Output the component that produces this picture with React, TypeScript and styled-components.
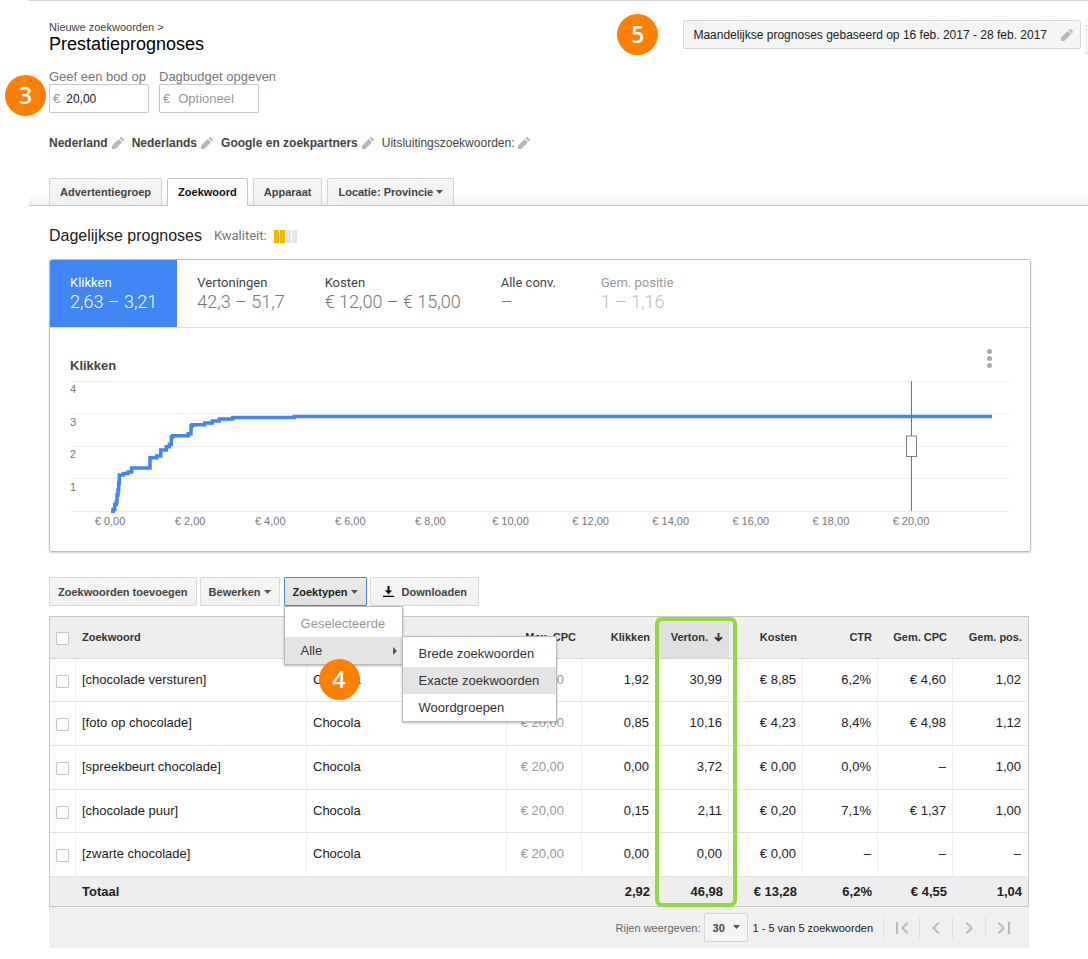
import React from "react";
import styled, { createGlobalStyle, css } from "styled-components";
import {
  MdChevronLeft,
  MdChevronRight,
  MdFirstPage,
  MdLastPage,
} from "react-icons/md";

const GlobalStyle = createGlobalStyle`
  *, *::before, *::after { box-sizing: border-box; }
  body {
    margin: 0;
    background: #fff;
    color: #222;
    font-family: "Liberation Sans", Arial, sans-serif;
    font-size: 13px;
  }
  button, input, select { font-family: inherit; margin: 0; }
  h1, h2, h3, p, ul { margin: 0; padding: 0; font-weight: normal; }
  ul { list-style: none; }
`;

/* ---------- shared ---------- */

const Page = styled.div`
  margin-left: 29px;
  border-top: 1px solid #d8d8d8;
`;

const Badge = styled.span`
  position: absolute;
  display: flex;
  align-items: center;
  justify-content: center;
  width: 41px;
  height: 41px;
  border-radius: 50%;
  background: #ff8000;
  color: #fff;
  font: 600 23px/41px "Open Sans", sans-serif;
  z-index: 5;
`;

const StepThree = styled(Badge)`
  left: -44px;
  top: 6px;
`;

const StepFour = styled(Badge)`
  left: 35px;
  top: 82px;
`;

const StepFive = styled(Badge)`
  right: calc(100% + 25px);
  top: -6px;
`;

const CaretIcon = styled.svg`
  display: block;
  fill: #555;
`;

const Caret = () => (
  <CaretIcon width="7" height="4" viewBox="0 0 7 4" aria-hidden="true">
    <path d="M0 0h7L3.5 4z" />
  </CaretIcon>
);

const PencilIcon = styled.svg`
  display: block;
  fill: #b8b8b8;
`;

const Pencil = () => (
  <PencilIcon width="12" height="12" viewBox="0 0 12 12" aria-hidden="true">
    <path d="M0 8.700L6.700 2 10 5.300 3.300 12H0zM7.500 1.200L8.400.300c.400-.400 1-.400 1.400 0l1.900 1.900c.400.400.400 1 0 1.400l-.900.900z" />
  </PencilIcon>
);

/* ---------- header ---------- */

const Header = styled.header`
  display: flex;
  justify-content: space-between;
  align-items: flex-start;
  padding: 19px 0 0 20px;
`;

const Crumb = styled.nav`
  font-size: 11px;
  line-height: 14px;
  color: #444;

  a {
    color: inherit;
    text-decoration: none;
  }
`;

const Title = styled.h1`
  font-size: 18px;
  line-height: 20px;
  color: #000;
`;

const HeaderActions = styled.div`
  display: flex;
  align-items: flex-start;
  gap: 4px;
`;

const DateWrap = styled.div`
  position: relative;
`;

const DateButton = styled.button`
  display: flex;
  align-items: center;
  gap: 14px;
  height: 29px;
  padding: 0 7px 0 9px;
  border: 1px solid #d8d8d8;
  border-radius: 2px;
  background: #f4f4f4;
  color: #222;
  font-size: 12px;
  white-space: nowrap;
`;

const NextButton = styled.div`
  width: 3px;
  height: 29px;
  margin-top: 5px;
  border: solid #d8d8d8;
  border-width: 1px 0;
  background: #f4f4f4;
`;

const BidForm = styled.form`
  position: relative;
  display: flex;
  gap: 10px;
  margin: 15px 0 0 20px;
`;

const Field = styled.div`
  width: 100px;

  label {
    display: block;
    line-height: 15px;
    color: #777;
    white-space: nowrap;
  }
`;

const MoneyBox = styled.div`
  display: flex;
  align-items: center;
  height: 29px;
  padding-left: 3px;
  border: 1px solid #c8c8c8;
  border-radius: 1px;
  color: #999;
`;

const MoneyInput = styled.input<{ $indent?: boolean }>`
  flex: 1;
  min-width: 0;
  height: 27px;
  padding: 0 0 0 ${(p) => (p.$indent ? 8 : 6)}px;
  border: 0;
  outline: 0;
  background: transparent;
  color: #222;
  font-size: 12px;

  &::placeholder {
    color: #999;
    font-size: 13px;
    opacity: 1;
  }
`;

const Filters = styled.div`
  display: flex;
  gap: 8px;
  margin: 22px 0 0 20px;
  height: 16px;
`;

const FilterButton = styled.button<{ $plain?: boolean }>`
  display: flex;
  align-items: center;
  gap: 4px;
  padding: 0;
  border: 0;
  background: none;
  color: #444;
  font-size: 12px;
  font-weight: ${(p) => (p.$plain ? "normal" : "bold")};
  white-space: nowrap;
`;

const TabBar = styled.nav`
  display: flex;
  gap: 5px;
  margin-top: 27px;
  padding-left: 20px;
  border-bottom: 1px solid #c4c4c4;
  background: linear-gradient(#fff 50%, #f1f1f1);
`;

const Tab = styled.button<{ $active?: boolean }>`
  display: flex;
  align-items: center;
  gap: 3px;
  height: 27px;
  padding: 0 10px;
  border: 1px solid #d4d4d4;
  border-bottom: 0;
  border-radius: 2px 2px 0 0;
  background: linear-gradient(#f6f6f6, #efefef);
  color: #444;
  font-size: 11px;
  font-weight: bold;
  white-space: nowrap;

  ${(p) =>
    p.$active &&
    css`
      height: 28px;
      margin-bottom: -1px;
      padding-bottom: 1px;
      border-color: #c4c4c4;
      background: #fff;
      color: #111;
    `}
`;

/* ---------- forecast card ---------- */

const SectionHead = styled.div`
  display: flex;
  align-items: center;
  height: 20px;
  margin: 20px 0 13px 20px;
`;

const SectionTitle = styled.h2`
  font-size: 16px;
  line-height: 20px;
`;

const QualityLabel = styled.span`
  margin: 0 7px 0 12px;
  font-family: Roboto, sans-serif;
  line-height: 20px;
  color: #777;
`;

const QualityBars = styled.div`
  display: flex;
  gap: 1px;
`;

const QualityBar = styled.i<{ $on: boolean }>`
  width: 5px;
  height: 13px;
  background: ${(p) => (p.$on ? "#f5b400" : "#e5e5e5")};
`;

const Card = styled.section`
  margin: 0 57px 0 20px;
  border: 1px solid #c0c0c0;
  border-radius: 3px;
  box-shadow: 0 1px 2px rgba(0, 0, 0, 0.2);
`;

const Metrics = styled.div`
  display: flex;
  border-bottom: 1px solid #dedede;
`;

const Metric = styled.button<{ $state?: "active" | "muted" }>`
  padding: 15px 20px 14px;
  border: 0;
  border-radius: ${(p) => (p.$state === "active" ? "2px 0 0 0" : "0")};
  background: ${(p) => (p.$state === "active" ? "#4285f4" : "none")};
  font-family: Roboto, sans-serif;
  text-align: left;
  white-space: nowrap;

  span, strong {
    display: block;
  }
  span {
    min-width: 60px;
    font-size: 13px;
    line-height: 16px;
    color: ${(p) =>
      p.$state === "active" ? "#fff" : p.$state === "muted" ? "#999" : "#444"};
  }
  strong {
    font-size: 18px;
    font-weight: 300;
    line-height: 22px;
    color: ${(p) =>
      p.$state === "active" ? "#fff" : p.$state === "muted" ? "#bbb" : "#777"};
  }
`;

const ChartArea = styled.div`
  padding: 20px 20px 15px;
`;

const ChartHead = styled.div`
  display: flex;
  justify-content: space-between;
  height: 24px;
`;

const ChartTitle = styled.h3`
  align-self: flex-end;
  font-size: 13px;
  font-weight: bold;
  line-height: 13px;
  color: #444;
`;

const MoreButton = styled.button`
  width: 20px;
  height: 20px;
  margin-right: 11px;
  padding: 0;
  border: 0;
  background: none;

  svg {
    display: block;
    fill: #aaa;
  }
`;

const ChartSvg = styled.svg`
  display: block;
  width: 100%;
  height: auto;

  text {
    font-size: 11px;
    fill: #777;
  }
`;

const GRID = [9, 41, 74, 106, 139];
const Y_LABELS: [string, number][] = [["4", 21], ["3", 54], ["2", 86], ["1", 119]];
const X_LABELS = [0, 2, 4, 6, 8, 10, 12, 14, 16, 18, 20];

const Chart = () => (
  <ChartSvg viewBox="0 0 940 164" role="img" aria-label="Klikken per bod">
    {GRID.map((y) => (
      <rect key={y} x="0" y={y} width="940" height="1" fill="#efefef" />
    ))}
    {Y_LABELS.map(([label, y]) => (
      <text key={label} x="0" y={y}>
        {label}
      </text>
    ))}
    {X_LABELS.map((value, i) => (
      <text key={value} x={40 + i * 80.1} y="153" textAnchor="middle">
        € {value},00
      </text>
    ))}
    <path
      d="M41 139.500H43V137.500H44.700V132.500H46.300V130H47V123H48V118H48.700V111H49.300V103H53.300V101.500H58V100H61.700V96H80V85.700H86.700V84H90.700V78H96.300V74.700H99.300V72.300H101.300V65H102.700V63.700H118.300V61.700H121V54H122.300V52.700H134.700V51H142.300V49H149.300V47H162.700V45.500H224.300V44.500H922"
      fill="none"
      stroke="#4285f4"
      strokeWidth="3.500"
    />
    <rect x="841" y="9" width="1" height="130" fill="#757575" />
    <rect x="836.500" y="64" width="10" height="20.500" fill="#fff" stroke="#808080" />
  </ChartSvg>
);

/* ---------- toolbar ---------- */

const Toolbar = styled.div`
  display: flex;
  gap: 3px;
  margin: 25px 0 10px 20px;
`;

const ToolButton = styled.button<{ $open?: boolean; $wide?: boolean }>`
  display: flex;
  align-items: center;
  gap: ${(p) => (p.$wide ? 8 : 3)}px;
  height: 29px;
  padding: ${(p) => (p.$wide ? "0 11px 0 12px" : "0 8px")};
  border: 1px solid ${(p) => (p.$open ? "#4285f4" : "#d8d8d8")};
  border-radius: 1px;
  background: ${(p) =>
    p.$open
      ? "linear-gradient(#ececec, #dedede)"
      : "linear-gradient(#f6f6f6, #f0f0f0)"};
  color: ${(p) => (p.$open ? "#222" : "#444")};
  font-size: 11px;
  font-weight: bold;
  white-space: nowrap;
`;

const MenuAnchor = styled.div`
  position: relative;
  margin-left: 1px;
`;

const Menu = styled.ul<{ $sub?: boolean }>`
  position: absolute;
  top: 100%;
  left: 0;
  z-index: 2;
  width: 119px;
  padding: 3px 0 0;
  border: 1px solid #bbb;
  background: #fff;
  box-shadow: 0 1px 2px rgba(0, 0, 0, 0.3);

  ${(p) =>
    p.$sub &&
    css`
      top: -1px;
      left: 117px;
      z-index: 3;
      width: 155px;
    `}
`;

const MenuItem = styled.li`
  position: relative;
`;

const MenuButton = styled.button<{ $on?: boolean }>`
  display: flex;
  align-items: center;
  justify-content: space-between;
  width: 100%;
  height: 27px;
  padding: 0 5px 0 16px;
  border: 0;
  background: ${(p) => (p.$on ? "#e4e4e4" : "#fff")};
  color: #333;
  font-size: 13px;
  white-space: nowrap;

  &:disabled { color: #999; }
`;

/* ---------- table ---------- */

const TableWrap = styled.div`
  position: relative;
  margin: 0 59px 0 20px;
`;

const Table = styled.table`
  width: 100%;
  table-layout: fixed;
  border: 1px solid #c8c8c8;
  border-spacing: 0;
`;

const HeadCell = styled.th<{ $left?: boolean; $sorted?: boolean }>`
  height: 42px;
  padding: 0 6px 2px;
  border-bottom: 1px solid #d8d8d8;
  background: ${(p) => (p.$sorted ? "#e0e0e0" : "#eee")};
  color: #333;
  font-size: 11px;
  text-align: ${(p) => (p.$left ? "left" : "right")};
  white-space: nowrap;

  svg {
    margin-left: 6px;
    vertical-align: -1px;
  }
`;

const BodyRow = styled.tr`
  height: 44px;

  &:nth-child(3n + 1) { height: 43px; }
`;

const Cell = styled.td<{ $left?: boolean; $bid?: boolean }>`
  padding: 0 ${(p) => (p.$bid ? 17 : 6)}px 2px 6px;
  border: solid #e4e4e4;
  border-width: 0 1px 1px 0;
  border-right-color: #efefef;
  color: ${(p) => (p.$bid ? "#999" : "#222")};
  text-align: ${(p) => (p.$left ? "left" : "right")};
  white-space: nowrap;

  &:last-child { border-right-color: #fff; }
`;

const TotalCell = styled.td<{ $left?: boolean }>`
  height: 29px;
  padding: 0 6px;
  background: #eee;
  font-weight: bold;
  text-align: ${(p) => (p.$left ? "left" : "right")};
  white-space: nowrap;
`;

const Check = styled.input.attrs({ type: "checkbox" })`
  appearance: none;
  display: block;
  width: 13px;
  height: 13px;
  margin: 4px 0 0;
  border: 1px solid #c6c6c6;
  border-radius: 1px;
  background: #fff;
`;

const Highlight = styled.div`
  position: absolute;
  top: 1px;
  right: 292px;
  bottom: 0;
  width: 82px;
  border: 4px solid #92d83e;
  border-radius: 7px;
  pointer-events: none;
`;

const Pager = styled.footer`
  display: flex;
  align-items: center;
  justify-content: flex-end;
  height: 41px;
  margin: 0 59px 0 20px;
  padding-right: 8px;
  background: #efefef;
  color: #666;
  font-size: 11px;
`;

const RangeText = styled.span`
  margin: 0 10px 0 5px;
  color: #222;
`;

const SelectWrap = styled.span`
  position: relative;
  margin-left: 3px;

  svg {
    position: absolute;
    top: 12px;
    right: 8px;
    pointer-events: none;
  }
`;

const PageSize = styled.select`
  appearance: none;
  display: block;
  width: 44px;
  height: 29px;
  padding: 0 0 0 8px;
  border: 1px solid #d4d4d4;
  border-radius: 2px;
  background: #f3f3f3;
  color: #444;
  font-size: 11px;
  font-weight: bold;
`;

const PagerButton = styled.button<{ $edge?: boolean }>`
  display: flex;
  align-items: center;
  justify-content: center;
  width: ${(p) => (p.$edge ? 36 : 33)}px;
  height: 23px;
  padding: 0;
  border: 0;
  border-left: 1px solid #e0e0e0;
  background: none;
  color: #bbb;
`;

type Row = [string, string, string, string, string, string, string, string];

const ROWS: Row[] = [
  ["[chocolade versturen]", "€ 20,00", "1,92", "30,99", "€ 8,85", "6,2%", "€ 4,60", "1,02"],
  ["[foto op chocolade]", "€ 20,00", "0,85", "10,16", "€ 4,23", "8,4%", "€ 4,98", "1,12"],
  ["[spreekbeurt chocolade]", "€ 20,00", "0,00", "3,72", "€ 0,00", "0,0%", "–", "1,00"],
  ["[chocolade puur]", "€ 20,00", "0,15", "2,11", "€ 0,20", "7,1%", "€ 1,37", "1,00"],
  ["[zwarte chocolade]", "€ 20,00", "0,00", "0,00", "€ 0,00", "–", "–", "–"],
];

const TOTALS = ["2,92", "46,98", "€ 13,28", "6,2%", "€ 4,55", "1,04"];
const COLUMNS: (number | undefined)[] = [26, undefined, 200, 75, 74, 73, 74, 75, 75, 75];

const FILTERS = ["Nederland", "Nederlands", "Google en zoekpartners"];

export default function App() {
  return (
    <>
      <GlobalStyle />
      <Page>
        <Header>
          <div>
            <Crumb>
              <a href="#zoekwoorden">Nieuwe zoekwoorden</a> &gt;
            </Crumb>
            <Title>Prestatieprognoses</Title>
          </div>
          <HeaderActions>
            <DateWrap>
              <StepFive>5</StepFive>
              <DateButton type="button">
                Maandelijkse prognoses gebaseerd op 16 feb. 2017 - 28 feb. 2017
                <Pencil />
              </DateButton>
            </DateWrap>
            <NextButton />
          </HeaderActions>
        </Header>

        <BidForm>
          <StepThree>3</StepThree>
          <Field>
            <label htmlFor="bid">Geef een bod op</label>
            <MoneyBox>
              €<MoneyInput id="bid" defaultValue="20,00" />
            </MoneyBox>
          </Field>
          <Field>
            <label htmlFor="budget">Dagbudget opgeven</label>
            <MoneyBox>
              €<MoneyInput id="budget" placeholder="Optioneel" $indent />
            </MoneyBox>
          </Field>
        </BidForm>

        <Filters>
          {FILTERS.map((name) => (
            <FilterButton key={name} type="button">
              {name}
              <Pencil />
            </FilterButton>
          ))}
          <FilterButton type="button" $plain>
            Uitsluitingszoekwoorden:
            <Pencil />
          </FilterButton>
        </Filters>

        <TabBar>
          <Tab type="button">Advertentiegroep</Tab>
          <Tab type="button" $active>Zoekwoord</Tab>
          <Tab type="button">Apparaat</Tab>
          <Tab type="button">
            Locatie: Provincie
            <Caret />
          </Tab>
        </TabBar>

        <SectionHead>
          <SectionTitle>Dagelijkse prognoses</SectionTitle>
          <QualityLabel>Kwaliteit:</QualityLabel>
          <QualityBars>
            {[true, true, false, false].map((on, i) => (
              <QualityBar key={i} $on={on} />
            ))}
          </QualityBars>
        </SectionHead>

        <Card>
          <Metrics>
            <Metric type="button" $state="active">
              <span>Klikken</span>
              <strong>2,63 – 3,21</strong>
            </Metric>
            <Metric type="button">
              <span>Vertoningen</span>
              <strong>42,3 – 51,7</strong>
            </Metric>
            <Metric type="button">
              <span>Kosten</span>
              <strong>€ 12,00 – € 15,00</strong>
            </Metric>
            <Metric type="button">
              <span>Alle conv.</span>
              <strong>–</strong>
            </Metric>
            <Metric type="button" $state="muted">
              <span>Gem. positie</span>
              <strong>1 – 1,16</strong>
            </Metric>
          </Metrics>
          <ChartArea>
            <ChartHead>
              <ChartTitle>Klikken</ChartTitle>
              <MoreButton type="button" aria-label="Meer opties">
                <svg width="20" height="20" viewBox="0 0 20 20">
                  <circle cx="10.500" cy="3.500" r="2.500" />
                  <circle cx="10.500" cy="10.500" r="2.500" />
                  <circle cx="10.500" cy="17.500" r="2.500" />
                </svg>
              </MoreButton>
            </ChartHead>
            <Chart />
          </ChartArea>
        </Card>

        <Toolbar>
          <ToolButton type="button">Zoekwoorden toevoegen</ToolButton>
          <ToolButton type="button">
            Bewerken
            <Caret />
          </ToolButton>
          <MenuAnchor>
            <ToolButton type="button" $open>
              Zoektypen
              <Caret />
            </ToolButton>
            <Menu>
              <MenuItem>
                <MenuButton type="button" disabled>Geselecteerde</MenuButton>
              </MenuItem>
              <MenuItem>
                <MenuButton type="button" $on>
                  Alle
                  <svg width="4" height="8" viewBox="0 0 4 8" fill="#555" aria-hidden="true">
                    <path d="M0 0v8l4-4z" />
                  </svg>
                </MenuButton>
                <Menu $sub>
                  <MenuItem>
                    <MenuButton type="button">Brede zoekwoorden</MenuButton>
                  </MenuItem>
                  <MenuItem>
                    <MenuButton type="button" $on>Exacte zoekwoorden</MenuButton>
                  </MenuItem>
                  <MenuItem>
                    <MenuButton type="button">Woordgroepen</MenuButton>
                  </MenuItem>
                </Menu>
              </MenuItem>
            </Menu>
            <StepFour>4</StepFour>
          </MenuAnchor>
          <ToolButton type="button" $wide>
            <svg width="11" height="11" viewBox="0 0 11 11" fill="#000" aria-hidden="true">
              <path d="M4.500 0h2v4.500H9L5.500 8.500 2 4.500h2.500zM0 9.700h11V11H0z" />
            </svg>
            Downloaden
          </ToolButton>
        </Toolbar>

        <TableWrap>
          <Table>
            <colgroup>
              {COLUMNS.map((width, i) => (
                <col key={i} width={width} />
              ))}
            </colgroup>
            <thead>
              <tr>
                <HeadCell $left>
                  <Check aria-label="Alles selecteren" />
                </HeadCell>
                <HeadCell $left>Zoekwoord</HeadCell>
                <HeadCell />
                <HeadCell>Max. CPC</HeadCell>
                <HeadCell>Klikken</HeadCell>
                <HeadCell $sorted>
                  Verton.
                  <svg width="9" height="9" viewBox="0 0 9 9" aria-hidden="true">
                    <path d="M4.500 0v8M1 4.200l3.500 3.300L8 4.200" fill="none" stroke="#333" strokeWidth="1.900" />
                  </svg>
                </HeadCell>
                <HeadCell>Kosten</HeadCell>
                <HeadCell>CTR</HeadCell>
                <HeadCell>Gem. CPC</HeadCell>
                <HeadCell>Gem. pos.</HeadCell>
              </tr>
            </thead>
            <tbody>
              {ROWS.map(([keyword, bid, ...values]) => (
                <BodyRow key={keyword}>
                  <Cell $left>
                    <Check aria-label={keyword} />
                  </Cell>
                  <Cell $left>{keyword}</Cell>
                  <Cell $left>Chocola</Cell>
                  <Cell $bid>{bid}</Cell>
                  {values.map((value, i) => (
                    <Cell key={i}>{value}</Cell>
                  ))}
                </BodyRow>
              ))}
            </tbody>
            <tfoot>
              <tr>
                <TotalCell />
                <TotalCell $left>Totaal</TotalCell>
                <TotalCell />
                <TotalCell />
                {TOTALS.map((value, i) => (
                  <TotalCell key={i}>{value}</TotalCell>
                ))}
              </tr>
            </tfoot>
          </Table>
          <Highlight />
        </TableWrap>

        <Pager>
          <label htmlFor="page-size">Rijen weergeven:</label>
          <SelectWrap>
            <PageSize id="page-size" defaultValue="30">
              <option>30</option>
            </PageSize>
            <Caret />
          </SelectWrap>
          <RangeText>1 - 5 van 5 zoekwoorden</RangeText>
          <PagerButton type="button" aria-label="Eerste pagina" $edge>
            <MdFirstPage size={24} />
          </PagerButton>
          <PagerButton type="button" aria-label="Vorige pagina">
            <MdChevronLeft size={24} />
          </PagerButton>
          <PagerButton type="button" aria-label="Volgende pagina">
            <MdChevronRight size={24} />
          </PagerButton>
          <PagerButton type="button" aria-label="Laatste pagina" $edge>
            <MdLastPage size={24} />
          </PagerButton>
        </Pager>
      </Page>
    </>
  );
}
